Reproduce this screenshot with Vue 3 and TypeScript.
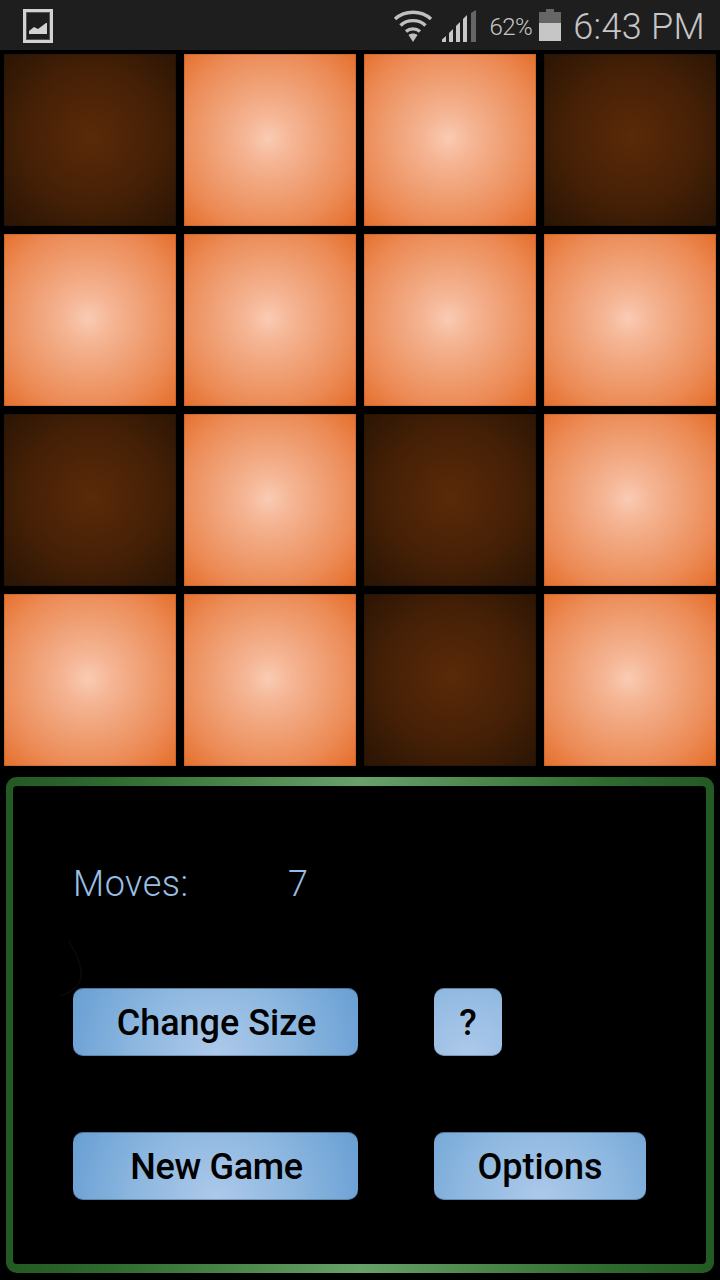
<script setup lang="ts">
const tiles: boolean[] = [
  false, true, true, false,
  true, true, true, true,
  false, true, false, true,
  true, true, false, true,
]
</script>

<template>
  <div class="screen">
    <header class="status">
      <svg class="pic" width="30" height="34" viewBox="0 0 30 34">
        <rect x="1.5" y="1.5" width="27" height="31" fill="#1e1e1e" stroke="#d2d2d2" stroke-width="3" />
        <rect x="3.5" y="3.5" width="23" height="27" fill="none" stroke="#555" stroke-width="1" />
        <path d="M6 25 L6 22 L11 18 L15 20 L23 14 L24 14 L24 25 Z" fill="#d2d2d2" />
      </svg>
      <span class="spacer"></span>
      <svg class="wifi" width="40" height="34" viewBox="0 0 40 34" fill="none" stroke="#c0c0c0" stroke-width="3.4">
        <path d="M2 10 C12 1 28 1 38 10" />
        <path d="M7.5 16.5 C14 10 26 10 32.5 16.5" />
        <path d="M13 22.5 C17 19 23 19 27 22.5" />
        <path d="M15.5 26 L20 33 L24.5 26 C22 24 18 24 15.5 26 Z" fill="#c0c0c0" stroke="none" />
      </svg>
      <svg class="signal" width="34" height="32" viewBox="0 0 34 32">
        <path d="M0 32 L0 29.5 L4 26 L4 32 Z" fill="#c8c8c8" />
        <path d="M7 32 L7 23 L11 19 L11 32 Z" fill="#c8c8c8" />
        <path d="M14 32 L14 16 L18 12 L18 32 Z" fill="#c8c8c8" />
        <path d="M21 32 L21 9 L25 5 L25 32 Z" fill="#c8c8c8" />
        <path d="M29 32 L29 3 L34 0 L34 32 Z" fill="#666" />
      </svg>
      <span class="pct">62%</span>
      <svg class="batt" width="22" height="32" viewBox="0 0 22 32">
        <rect x="7" y="0" width="8" height="3" fill="#666" />
        <rect x="0" y="3" width="22" height="11" fill="#666" />
        <rect x="0" y="14" width="22" height="18" fill="#c6c6c6" />
      </svg>
      <span class="clock">6:43 PM</span>
    </header>

    <section class="board">
      <div v-for="(lit, i) in tiles" :key="i" class="tile" :class="lit ? 'on' : 'off'"></div>
    </section>

    <section class="frame">
      <div class="panel">
        <svg class="arc" width="24" height="58" viewBox="0 0 24 58" fill="none">
          <path d="M9 1 C16 14 22 26 21 36 C20 46 12 52 1 56" stroke="#0a0a0a" stroke-width="1.5" />
        </svg>
        <div class="moves">
          <span class="label">Moves:</span>
          <span class="count">7</span>
        </div>
        <div class="row row-a">
          <button class="btn wide">Change Size</button>
          <button class="btn help">?</button>
        </div>
        <div class="row row-b">
          <button class="btn wide tight">New Game</button>
          <button class="btn opts">Options</button>
        </div>
      </div>
    </section>
  </div>
</template>

<style>
html, body { margin: 0; background: #000; }
</style>

<style scoped>
.screen {
  width: 720px;
  height: 1280px;
  background: #000;
  overflow: hidden;
  font-family: Roboto, "Liberation Sans", sans-serif;
}
.status {
  height: 50px;
  background: #1e1e1e;
  display: flex;
  align-items: center;
  padding: 0 15px 0 23px;
  box-sizing: border-box;
  color: #c6c6c6;
}
.pic { margin-top: 2px; }
.spacer { flex: 1; }
.wifi { margin-top: 2px; }
.signal { margin-left: 9px; margin-top: 2px; }
.pct {
  margin-left: 13px;
  font-size: 24px;
  font-weight: 300;
  letter-spacing: -0.5px;
  line-height: 50px;
  margin-top: 3px;
}
.batt { margin-left: 7px; margin-top: 0; }
.clock {
  margin-left: 12px;
  font-size: 36px;
  font-weight: 300;
  letter-spacing: 0.3px;
  line-height: 50px;
  margin-top: 3px;
}
.board {
  display: grid;
  grid-template-columns: repeat(4, 172px);
  grid-auto-rows: 172px;
  gap: 8px;
  padding: 4px;
}
.tile {
  box-sizing: border-box;
  box-shadow: inset 0 0 0 1px rgba(0, 0, 0, 0.12);
}
.on {
  background: radial-gradient(circle 122px at 49% 49%, #f9cbb3 0%, #f5b594 20%, #f0a176 45%, #ec8b56 72%, #e56f2c 100%);
}
.off {
  background: radial-gradient(circle 122px at 51% 48%, #5a2a08 0%, #4f2407 30%, #452006 55%, #371a05 78%, #2a1505 100%);
}
.frame {
  margin: 7px 6px 0;
  height: 496px;
  box-sizing: border-box;
  padding: 9px 8px 9px 7px;
  border-radius: 11px;
  background: linear-gradient(90deg, #235a23 0%, #2f6a2f 15%, #68a268 50%, #2f6a2f 85%, #235a23 100%);
}
.panel {
  height: 100%;
  background: #000;
  border-radius: 4px;
  padding: 77px 0 0 60px;
  box-sizing: border-box;
  position: relative;
}
.arc {
  position: absolute;
  left: 47px;
  top: 154px;
}
.moves {
  display: flex;
  align-items: center;
  height: 40px;
  color: #98bfe3;
  font-size: 36px;
  font-weight: 300;
  padding-top: 1px;
  margin-bottom: -1px;
}
.label {
  width: 215px;
  letter-spacing: 0.5px;
}
.row {
  display: flex;
  gap: 76px;
  height: 68px;
}
.row-a { margin-top: 85px; }
.row-b { margin-top: 76px; }
.btn {
  appearance: none;
  border: 0;
  padding: 2px 0 0 0;
  height: 68px;
  border-radius: 10px;
  color: #000;
  font-family: Roboto, "Liberation Sans", sans-serif;
  font-size: 36px;
  font-weight: 500;
  background: radial-gradient(circle 170px at 50% 100%, #adc9ea 0%, #8eb8e0 45%, #6aa0d4 90%, #629bd2 100%);
  box-shadow: inset 0 1px 0 rgba(40, 60, 80, 0.45), inset 0 -1px 0 rgba(40, 60, 80, 0.35);
}
.wide { width: 285px; padding-left: 2px; }
.tight { letter-spacing: -0.3px; }
.help { width: 68px; }
.opts { width: 212px; }
</style>
